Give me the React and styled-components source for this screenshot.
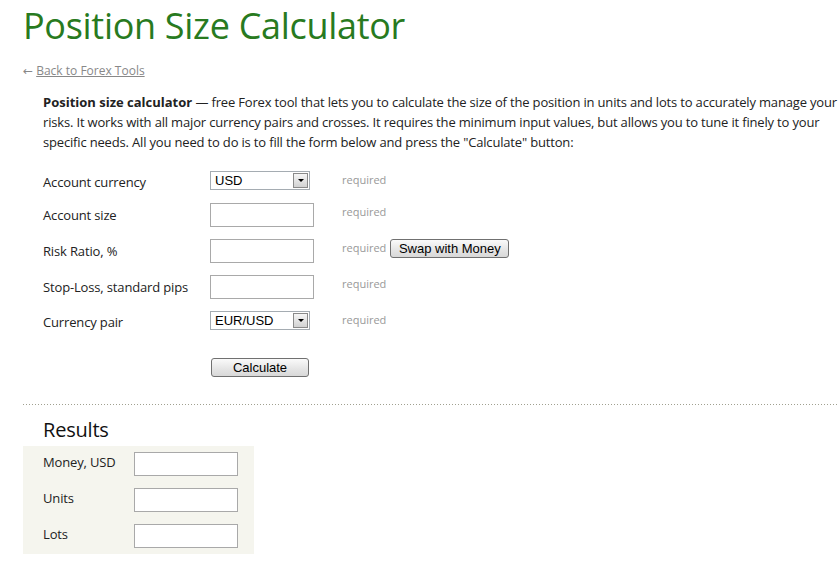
import React from "react";
import styled, { createGlobalStyle } from "styled-components";

const GlobalStyle = createGlobalStyle`
  body {
    margin: 0;
    background: #fff;
    font-family: "Open Sans", "DejaVu Sans", sans-serif;
    color: #222;
    letter-spacing: -0.15px;
  }
`;

const Page = styled.div`
  padding: 0 0 0 23px;
  width: 815px;
`;

const Title = styled.h1`
  margin: 0;
  padding-top: 3px;
  font-size: 36px;
  font-weight: normal;
  line-height: 46px;
  color: #287a20;
  letter-spacing: -0.3px;
`;

const BackLink = styled.a`
  display: inline-block;
  margin-top: 14px;
  font-size: 12px;
  line-height: 16px;
  color: #888;
  text-decoration: none;
  letter-spacing: 0;
  span {
    text-decoration: underline;
  }
`;

const Content = styled.div`
  padding-left: 20px;
`;

const Intro = styled.p`
  margin: 12px 0 0;
  font-size: 13px;
  line-height: 20px;
  width: 795px;
  letter-spacing: -0.17px;
  b {
    font-weight: bold;
    letter-spacing: 0;
  }
`;

const Form = styled.div`
  display: grid;
  grid-template-columns: 167px 132px auto;
  row-gap: 12px;
  margin-top: 19px;
  align-items: start;
`;

const Label = styled.div`
  font-size: 13px;
  line-height: 17px;
  padding-top: ${(p) => (p.$select ? "3px" : "4px")};
`;

const Required = styled.div`
  display: flex;
  align-items: flex-start;
  gap: 4px;
  font-size: 11px;
  line-height: 14px;
  color: #999;
  letter-spacing: 0;
  span {
    padding-top: 2px;
  }
`;

const TextInput = styled.input`
  box-sizing: border-box;
  display: block;
  width: 104px;
  height: 24px;
  border: 1px solid #a9a9a9;
  background: #fff;
  margin: 0;
  padding: 2px 4px;
  font: 13px "Liberation Sans", Arial, sans-serif;
`;

const SelectBox = styled.div`
  box-sizing: border-box;
  display: flex;
  align-items: center;
  width: 100px;
  height: 19px;
  border: 1px solid #a5acb2;
  background: #fff;
  padding: 1px;
`;

const SelectValue = styled.div`
  flex: 1;
  font: 13px/15px "Liberation Sans", Arial, sans-serif;
  letter-spacing: 0;
  color: #000;
  padding-left: 3px;
`;

const Arrow = styled.div`
  box-sizing: border-box;
  width: 15px;
  height: 15px;
  border: 1px solid #8a8a8a;
  background: linear-gradient(#f6f6f6, #d2d2d2);
  display: flex;
  align-items: center;
  justify-content: center;
  &::after {
    content: "";
    border-left: 3px solid transparent;
    border-right: 3px solid transparent;
    border-top: 3px solid #000;
  }
`;

const Button = styled.button`
  box-sizing: border-box;
  display: block;
  height: 19px;
  padding: 0 4px;
  border: 1px solid #707070;
  border-radius: 3px;
  background: linear-gradient(#fafafa, #e4e4e4 60%, #d8d8d8);
  font: 13px/15px "Liberation Sans", Arial, sans-serif;
  letter-spacing: 0;
  color: #000;
  white-space: nowrap;
  flex-shrink: 0;
  width: ${(p) => p.$w || "auto"};
`;

const CalcCell = styled.div`
  grid-column: 2;
  display: flex;
  padding-top: 15px;
  padding-left: 1px;
`;

const Divider = styled.div`
  margin-top: 27px;
  height: 1px;
  background-image: linear-gradient(to right, #a0a090 33%, transparent 33%);
  background-size: 3px 1px;
`;

const ResultsTitle = styled.h2`
  margin: 13px 0 0 20px;
  font-size: 20px;
  font-weight: normal;
  line-height: 24px;
  color: #111;
  letter-spacing: -0.2px;
`;

const ResultsPanel = styled.div`
  margin-top: 4px;
  width: 231px;
  box-sizing: border-box;
  background: #f5f5ee;
  padding: 6px 0 6px 20px;
  display: grid;
  grid-template-columns: 91px 104px;
  row-gap: 12px;
`;

const ResultLabel = styled.div`
  font-size: 13px;
  line-height: 17px;
  padding-top: 2px;
`;

function Select({ value }) {
  return (
    <SelectBox>
      <SelectValue>{value}</SelectValue>
      <Arrow />
    </SelectBox>
  );
}

const fields = [
  { label: "Account currency", select: "USD" },
  { label: "Account size" },
  { label: "Risk Ratio, %", swap: true },
  { label: "Stop-Loss, standard pips" },
  { label: "Currency pair", select: "EUR/USD" },
];

export default function App() {
  return (
    <>
      <GlobalStyle />
      <Page>
        <Title>Position Size Calculator</Title>
        <BackLink href="#">
          ← <span>Back to Forex Tools</span>
        </BackLink>
        <Content>
          <Intro>
            <b>Position size calculator</b> — free Forex tool that lets you to
            calculate the size of the position in units and lots to accurately
            manage your risks. It works with all major currency pairs and
            crosses. It requires the minimum input values, but allows you to
            tune it finely to your specific needs. All you need to do is to fill
            the form below and press the "Calculate" button:
          </Intro>
          <Form>
            {fields.map((f) => (
              <React.Fragment key={f.label}>
                <Label $select={!!f.select}>{f.label}</Label>
                <div>{f.select ? <Select value={f.select} /> : <TextInput />}</div>
                <Required>
                  <span>required</span>
                  {f.swap && <Button $w="119px">Swap with Money</Button>}
                </Required>
              </React.Fragment>
            ))}
            <CalcCell>
              <Button $w="98px">Calculate</Button>
            </CalcCell>
          </Form>
        </Content>
        <Divider />
        <ResultsTitle>Results</ResultsTitle>
        <ResultsPanel>
          <ResultLabel>Money, USD</ResultLabel>
          <TextInput />
          <ResultLabel>Units</ResultLabel>
          <TextInput />
          <ResultLabel>Lots</ResultLabel>
          <TextInput />
        </ResultsPanel>
      </Page>
    </>
  );
}
